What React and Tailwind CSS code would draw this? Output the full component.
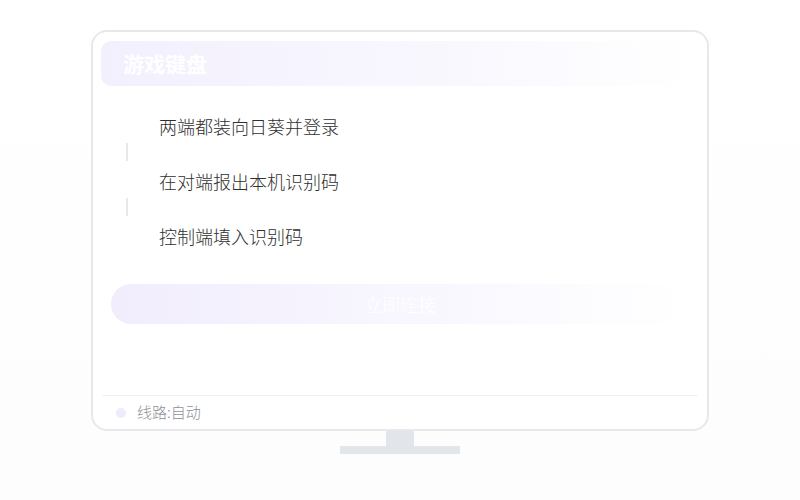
import React from 'react';

const steps = ['两端都装向日葵并登录', '在对端报出本机识别码', '控制端填入识别码'];

const App = () => {
  return (
    <div
      className="w-[800px] h-[500px] bg-gradient-to-b from-white to-[#fdfdfd] flex flex-col items-center pt-[30px]"
      style={{ fontFamily: '"Noto Sans CJK SC", "Noto Sans", sans-serif' }}
    >
      <div className="w-[618px] h-[401px] border-2 border-[#e6e8ec] rounded-[16px] bg-white flex flex-col px-[8px] pt-[9px]">
        <div className="h-[45px] rounded-[10px] bg-gradient-to-r from-[#f3f0fe] via-[#f8f6fe] to-white flex items-center pl-[22px]">
          <span className="text-[21px] font-bold text-white leading-none">游戏键盘</span>
        </div>

        <div className="mt-[28px] ml-[25px] flex flex-col">
          {steps.map((s, i) => (
            <div key={s}>
              <div className="pl-[33px] h-[24px] flex items-center text-[18px] font-light text-[#2f2f2f] leading-none">
                {s}
              </div>
              {i < steps.length - 1 && (
                <div className="h-[31px] pt-[5px]">
                  <div className="w-[2px] h-[18px] bg-[#e6e8ec]" />
                </div>
              )}
            </div>
          ))}
        </div>

        <div className="mt-[36px] mx-[10px] h-[40px] rounded-full bg-gradient-to-r from-[#f1edfd] via-[#f8f6fe] to-white flex items-center justify-center">
          <span className="font-['Noto_Serif_CJK_SC','Noto_Serif_SC','AR_PL_UMing_CN',serif] text-[18px] text-white">
            立即连接
          </span>
        </div>

        <div className="mt-auto border-t border-[#eef0f3] mx-[1px] h-[34px] flex items-center pl-[14px] gap-[11px]">
          <span className="w-[10px] h-[10px] rounded-full bg-[#efebfc]" />
          <span className="text-[15px] font-light text-[#8c8f96]">线路:自动</span>
        </div>
      </div>
      <div className="w-[28px] h-[15px] bg-[#e2e5ea]" />
      <div className="w-[120px] h-[8px] bg-[#e2e5ea]" />
    </div>
  );
};

export default App;
